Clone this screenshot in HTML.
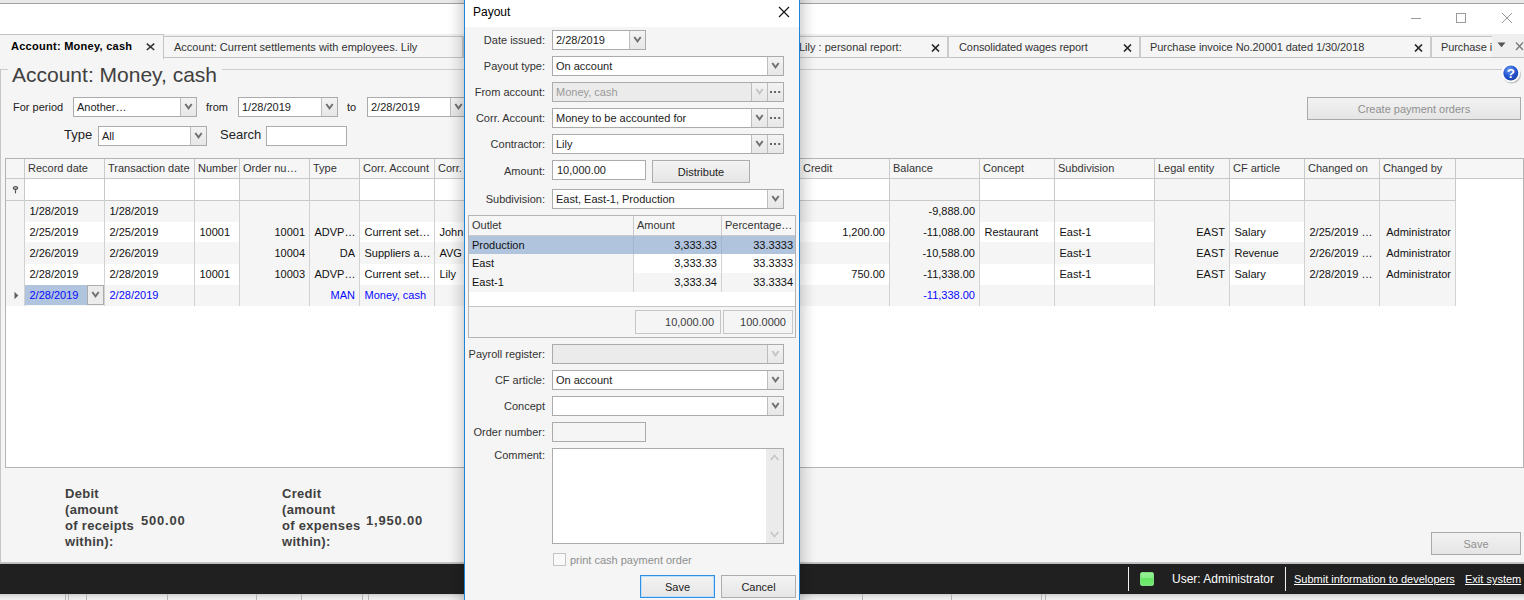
<!DOCTYPE html>
<html lang="en">
<head>
<meta charset="utf-8">
<title>Account: Money, cash - Payout</title>
<style>
html,body{margin:0;padding:0;background:#f5f5f5;}
body{width:1524px;height:600px;overflow:hidden;font-family:"Liberation Sans",sans-serif;font-size:11px;color:#222;}
#app{position:relative;width:1524px;height:600px;overflow:hidden;background:#f5f5f5;}
#app div,#app span,#app i,#app a{box-sizing:border-box;}
.abs{position:absolute;}
.t{position:absolute;white-space:pre;line-height:14px;}
/* top */
#topstrip{position:absolute;left:0;top:0;width:1524px;height:3px;background:#e9e9e9;}
#topline{position:absolute;left:0;top:3px;width:1524px;height:1px;background:#a2a2a2;}
#titlebar{position:absolute;left:0;top:4px;width:1524px;height:30px;background:#fff;}
#tabstrip{position:absolute;left:0;top:34px;width:1524px;height:24px;background:#efefef;}
.tab{position:absolute;top:2px;height:22px;border:1px solid #c3c3c3;border-left:none;border-right:2px solid #cbcbcb;background:#f5f5f5;line-height:20px;white-space:pre;color:#333;}
.tab .x{position:absolute;top:6.5px;}
.tabA{position:absolute;left:0;top:0;width:164px;height:25px;background:#f5f5f5;border-top:1px solid #c3c3c3;border-right:1px solid #c3c3c3;font-weight:bold;color:#000;line-height:24px;letter-spacing:.27px;white-space:pre;}
/* combos */
.combo{position:absolute;border:1px solid #ababab;background:#fff;color:#222;}
.combo.dis{background:#ebebeb;color:#9a9a9a;}
.combo .ctext{position:absolute;left:3px;top:0;line-height:18px;white-space:pre;}
.combo .cbtn{position:absolute;top:0;width:16px;height:100%;border-left:1px solid #bdbdbd;background:linear-gradient(#f3f3f3,#e7e7e7);}
.combo .chev{position:absolute;left:3px;top:5px;}
.combo .dots{position:absolute;left:0;top:0;width:15px;text-align:center;font-style:normal;font-weight:bold;font-size:11px;line-height:18px;color:#555;letter-spacing:1px;text-indent:1px;}
.inp{position:absolute;border:1px solid #ababab;background:#fff;line-height:18px;white-space:pre;padding-left:4px;color:#222;}
.btn{position:absolute;border:1px solid #adadad;background:linear-gradient(#f3f3f3,#e6e6e6);text-align:center;color:#222;white-space:pre;}
.btn.dis{color:#909090;background:linear-gradient(#f2f2f2,#e5e5e5);border-color:#a9a9a9;}
/* grid */
#grid{position:absolute;left:5px;top:158px;width:1519px;height:310px;border:1px solid #b4b4b4;background:#fff;overflow:hidden;}
.hc{position:absolute;top:0;height:20px;background:#f6f6f6;border-right:1px solid #c9c9c9;border-bottom:1px solid #c9c9c9;line-height:19px;padding-left:3px;color:#333;white-space:pre;overflow:hidden;}
.fc{position:absolute;top:20px;height:22px;border-right:1px solid #c9c9c9;border-bottom:1px solid #c9c9c9;background:#fff;}
.fc.g{background:#f5f5f5;}
.c{position:absolute;height:21px;line-height:21px;border-right:1px solid #d2d2d2;white-space:pre;overflow:hidden;color:#111;padding:0 4px 0 4.5px;}
.c.r{text-align:right;}
.c.g{background:#f5f5f5;}
.c.w{background:#fff;}
.c.b{color:#0808ff;}
/* footer */
.sum{position:absolute;font-weight:bold;font-size:13px;line-height:16px;color:#3f3f3f;white-space:pre;letter-spacing:.3px;}
/* status */
#status{position:absolute;left:0;top:564px;width:1524px;height:30px;background:#202020;color:#fff;}
#status .sep{position:absolute;top:3px;width:1px;height:24px;background:#f0f0f0;}
#status a{position:absolute;color:#fff;text-decoration:underline;white-space:pre;line-height:14px;}
#below{position:absolute;left:0;top:594px;width:1524px;height:6px;background:linear-gradient(#cfcfcf,#e6e6e6 50%,#f0f0f0);}
#below i{position:absolute;top:0;width:1px;height:7px;background:#b4b4b4;}
/* dialog */
#shadow{position:absolute;left:447px;top:-10px;width:369px;height:630px;background:linear-gradient(90deg,rgba(0,0,0,0) 0,rgba(0,0,0,.02) 5px,rgba(0,0,0,.07) 11px,rgba(0,0,0,.15) 17px,rgba(0,0,0,.15) 353px,rgba(0,0,0,.07) 359px,rgba(0,0,0,.02) 365px,rgba(0,0,0,0) 369px);}
#dlg{position:absolute;left:464px;top:-1px;width:336px;height:610px;border:1px solid #1a86d9;background:#f5f5f5;}
#dlgtitle{position:absolute;left:0;top:0;width:334px;height:27px;background:#fff;}
#dlg .lbl{position:absolute;left:0;width:80px;text-align:right;line-height:14px;white-space:pre;color:#333;}
#sub{position:absolute;left:3px;top:215px;width:328px;height:123px;border:1px solid #b4b4b4;background:#fff;}
.sh{position:absolute;top:0;height:20px;background:#f6f6f6;border-right:1px solid #c9c9c9;border-bottom:1px solid #c9c9c9;line-height:19px;padding-left:3px;color:#333;white-space:pre;}
.sc{position:absolute;height:19px;line-height:19px;white-space:pre;padding:0 4px 0 3px;color:#111;border-right:1px solid #d2d2d2;}
.sc.r{text-align:right;}
.sc.s{background:#b0c4de;border-right-color:#a3b6cf;}
.sc.g{background:#f5f5f5;}
.sf{position:absolute;top:94px;height:24px;border:1px solid #c6c6c6;background:#f5f5f5;text-align:right;line-height:22px;padding-right:6px;color:#3a3a3a;white-space:pre;}
</style>
</head>
<body>
<div id="app">

<div id="topstrip"></div><div id="topline"></div><div id="titlebar">
<svg class="abs" style="left:1408px;top:6px" width="110" height="20" viewBox="0 0 110 20"><g fill="none" stroke="#9a9a9a" stroke-width="1"><path d="M3 8.5H13"/><rect x="48.5" y="3.5" width="9" height="9"/><path d="M94 3L104 13M104 3L94 13"/></g></svg>
</div>
<div id="tabstrip">
<div class="abs" style="left:0;top:23px;width:1524px;height:1px;background:#c3c3c3"></div>
<div class="tab" style="left:164px;width:300px;padding-left:10px">Account: Current settlements with employees. Lily</div>
<div class="tab" style="left:700px;width:249px;padding-left:99px">Lily : personal report:<svg class="x" width="9" height="8" viewBox="0 0 9 8" style="left:231px"><path d="M1 0.5L8 7.5M8 0.5L1 7.5" stroke="#2b2b2b" stroke-width="1.7" fill="none"/></svg></div>
<div class="tab" style="left:949px;width:192px;padding-left:10px;letter-spacing:-.09px">Consolidated wages report<svg class="x" width="9" height="8" viewBox="0 0 9 8" style="left:174px"><path d="M1 0.5L8 7.5M8 0.5L1 7.5" stroke="#2b2b2b" stroke-width="1.7" fill="none"/></svg></div>
<div class="tab" style="left:1141px;width:291px;padding-left:9px;letter-spacing:-.07px">Purchase invoice No.20001 dated 1/30/2018<svg class="x" width="9" height="8" viewBox="0 0 9 8" style="left:273px"><path d="M1 0.5L8 7.5M8 0.5L1 7.5" stroke="#2b2b2b" stroke-width="1.7" fill="none"/></svg></div>
<div class="tab" style="left:1432px;width:120px;padding-left:9px;letter-spacing:-.1px">Purchase invoice</div>
<div class="abs" style="left:1492px;top:0;width:32px;height:23px;background:#efefef"></div>
<svg class="abs" style="left:1497px;top:8px" width="9" height="6" viewBox="0 0 9 6"><path d="M0.5 0.5H8.5L4.5 5.2Z" fill="#555"/></svg>
<svg class="abs" style="left:1515px;top:8px" width="9" height="9" viewBox="0 0 9 9"><path d="M1 0.5L8 8M8 0.5L1 8" stroke="#787878" stroke-width="1.25" fill="none"/></svg>
<div class="tabA"><span class="abs" style="left:11px;top:-1px">Account: Money, cash</span><svg class="abs" style="left:146px;top:8px" width="9" height="8" viewBox="0 0 9 8"><path d="M0.8 0.6L8.2 7M8.2 0.6L0.8 7" stroke="#333" stroke-width="1.6" fill="none"/></svg></div>
</div>
<div class="abs" style="left:0;top:69px;width:1502px;height:1px;background:#cdcdcd"></div>
<div class="abs" style="left:0;top:69px;width:1px;height:493px;background:#c6c6c6"></div>
<div class="t" style="left:8px;top:62px;font-size:21px;line-height:26px;color:#404040;background:#f5f5f5;padding:0 5px 0 4px;height:24px">Account: Money, cash</div>
<svg class="abs" style="left:1500px;top:62px" width="22" height="24" viewBox="0 0 22 24"><defs><radialGradient id="hg" cx="40%" cy="30%" r="75%"><stop offset="0" stop-color="#6f9cf0"/><stop offset="0.55" stop-color="#2458d2"/><stop offset="1" stop-color="#1a3ea8"/></radialGradient></defs><ellipse cx="11.8" cy="12.6" rx="9.2" ry="9" fill="#c2c2c2"/><circle cx="10.8" cy="11" r="9.3" fill="#fff"/><circle cx="10.8" cy="11" r="7.5" fill="url(#hg)"/><text x="10.8" y="15.6" text-anchor="middle" font-family="Liberation Sans, sans-serif" font-weight="bold" font-size="13.5" fill="#fff">?</text></svg>
<div class="t" style="left:13px;top:100px">For period</div>
<div class="combo  " style="left:73px;top:97px;width:124px;height:20px"><span class="ctext">Another…</span><span class="cbtn" style="right:0px"><svg class="chev" width="9" height="7" viewBox="0 0 9 7"><path d="M1.3 1 L4.5 5.4 L7.7 1" fill="none" stroke="#707070" stroke-width="1.9"/></svg></span></div>
<div class="t" style="left:206px;top:100px">from</div>
<div class="combo  " style="left:238px;top:97px;width:100px;height:20px"><span class="ctext">1/28/2019</span><span class="cbtn" style="right:0px"><svg class="chev" width="9" height="7" viewBox="0 0 9 7"><path d="M1.3 1 L4.5 5.4 L7.7 1" fill="none" stroke="#707070" stroke-width="1.9"/></svg></span></div>
<div class="t" style="left:347px;top:100px">to</div>
<div class="combo  " style="left:367px;top:97px;width:100px;height:20px"><span class="ctext">2/28/2019</span><span class="cbtn" style="right:0px"><svg class="chev" width="9" height="7" viewBox="0 0 9 7"><path d="M1.3 1 L4.5 5.4 L7.7 1" fill="none" stroke="#707070" stroke-width="1.9"/></svg></span></div>
<div class="t" style="left:64px;top:127px;font-size:13px;line-height:16px">Type</div>
<div class="combo  " style="left:98px;top:126px;width:109px;height:20px"><span class="ctext">All</span><span class="cbtn" style="right:0px"><svg class="chev" width="9" height="7" viewBox="0 0 9 7"><path d="M1.3 1 L4.5 5.4 L7.7 1" fill="none" stroke="#707070" stroke-width="1.9"/></svg></span></div>
<div class="t" style="left:220px;top:127px;font-size:13px;line-height:16px">Search</div>
<div class="inp" style="left:266px;top:126px;width:81px;height:20px"></div>
<div class="btn dis" style="left:1307px;top:97px;width:214px;height:23px;line-height:22px">Create payment orders</div>
<div id="grid">
<div class="hc" style="left:0px;width:19px"></div>
<div class="hc" style="left:19px;width:80px">Record date</div>
<div class="hc" style="left:99px;width:90px">Transaction date</div>
<div class="hc" style="left:189px;width:45px">Number</div>
<div class="hc" style="left:234px;width:70px">Order nu…</div>
<div class="hc" style="left:304px;width:50px">Type</div>
<div class="hc" style="left:354px;width:75px">Corr. Account</div>
<div class="hc" style="left:429px;width:100px">Corr. contr…</div>
<div class="hc" style="left:529px;width:175px">Comment</div>
<div class="hc" style="left:704px;width:90px">Debit</div>
<div class="hc" style="left:794px;width:90px">Credit</div>
<div class="hc" style="left:884px;width:90px">Balance</div>
<div class="hc" style="left:974px;width:75px">Concept</div>
<div class="hc" style="left:1049px;width:100px">Subdivision</div>
<div class="hc" style="left:1149px;width:75px">Legal entity</div>
<div class="hc" style="left:1224px;width:75px">CF article</div>
<div class="hc" style="left:1299px;width:75px">Changed on</div>
<div class="hc" style="left:1374px;width:76px">Changed by</div>
<div class="hc" style="left:1450px;width:70px;border-right:none"></div>
<div class="fc g" style="left:0px;width:19px"></div>
<div class="fc " style="left:19px;width:80px"></div>
<div class="fc " style="left:99px;width:90px"></div>
<div class="fc " style="left:189px;width:45px"></div>
<div class="fc g" style="left:234px;width:70px"></div>
<div class="fc g" style="left:304px;width:50px"></div>
<div class="fc " style="left:354px;width:75px"></div>
<div class="fc " style="left:429px;width:100px"></div>
<div class="fc " style="left:529px;width:175px"></div>
<div class="fc " style="left:704px;width:90px"></div>
<div class="fc " style="left:794px;width:90px"></div>
<div class="fc g" style="left:884px;width:90px"></div>
<div class="fc " style="left:974px;width:75px"></div>
<div class="fc " style="left:1049px;width:100px"></div>
<div class="fc g" style="left:1149px;width:75px"></div>
<div class="fc " style="left:1224px;width:75px"></div>
<div class="fc g" style="left:1299px;width:75px"></div>
<div class="fc g" style="left:1374px;width:76px"></div>
<svg class="abs" style="left:5.9px;top:27px" width="7" height="9" viewBox="0 0 7 9"><path d="M1.2 2L3.5 4.9L5.8 2Z" fill="#505050"/><ellipse cx="3.5" cy="1.9" rx="2.2" ry="1.35" fill="#bdbdbd" stroke="#505050" stroke-width="1.1"/><path d="M3.5 4.4V7.4" stroke="#505050" stroke-width="1.15"/></svg>
<div class="c g " style="left:0px;top:42px;width:19px;height:21px;line-height:21px"></div>
<div class="c g " style="left:19px;top:42px;width:80px;height:21px;line-height:21px">1/28/2019</div>
<div class="c g " style="left:99px;top:42px;width:90px;height:21px;line-height:21px">1/28/2019</div>
<div class="c g " style="left:189px;top:42px;width:45px;height:21px;line-height:21px"></div>
<div class="c r g " style="left:234px;top:42px;width:70px;height:21px;line-height:21px"></div>
<div class="c r g " style="left:304px;top:42px;width:50px;height:21px;line-height:21px"></div>
<div class="c g " style="left:354px;top:42px;width:75px;height:21px;line-height:21px"></div>
<div class="c g " style="left:429px;top:42px;width:100px;height:21px;line-height:21px"></div>
<div class="c g " style="left:529px;top:42px;width:175px;height:21px;line-height:21px"></div>
<div class="c r g " style="left:704px;top:42px;width:90px;height:21px;line-height:21px"></div>
<div class="c r g " style="left:794px;top:42px;width:90px;height:21px;line-height:21px"></div>
<div class="c r g " style="left:884px;top:42px;width:90px;height:21px;line-height:21px">-9,888.00</div>
<div class="c g " style="left:974px;top:42px;width:75px;height:21px;line-height:21px"></div>
<div class="c g " style="left:1049px;top:42px;width:100px;height:21px;line-height:21px"></div>
<div class="c r g " style="left:1149px;top:42px;width:75px;height:21px;line-height:21px"></div>
<div class="c g " style="left:1224px;top:42px;width:75px;height:21px;line-height:21px"></div>
<div class="c g " style="left:1299px;top:42px;width:75px;height:21px;line-height:21px"></div>
<div class="c r g " style="left:1374px;top:42px;width:76px;height:21px;line-height:21px"></div>
<div class="c g " style="left:0px;top:63px;width:19px;height:20px;line-height:20px"></div>
<div class="c w " style="left:19px;top:63px;width:80px;height:20px;line-height:20px">2/25/2019</div>
<div class="c w " style="left:99px;top:63px;width:90px;height:20px;line-height:20px">2/25/2019</div>
<div class="c w " style="left:189px;top:63px;width:45px;height:20px;line-height:20px">10001</div>
<div class="c r g " style="left:234px;top:63px;width:70px;height:20px;line-height:20px">10001</div>
<div class="c r g " style="left:304px;top:63px;width:50px;height:20px;line-height:20px">ADVP…</div>
<div class="c w " style="left:354px;top:63px;width:75px;height:20px;line-height:20px">Current set…</div>
<div class="c w " style="left:429px;top:63px;width:100px;height:20px;line-height:20px">John</div>
<div class="c w " style="left:529px;top:63px;width:175px;height:20px;line-height:20px"></div>
<div class="c r w " style="left:704px;top:63px;width:90px;height:20px;line-height:20px"></div>
<div class="c r w " style="left:794px;top:63px;width:90px;height:20px;line-height:20px">1,200.00</div>
<div class="c r g " style="left:884px;top:63px;width:90px;height:20px;line-height:20px">-11,088.00</div>
<div class="c w " style="left:974px;top:63px;width:75px;height:20px;line-height:20px">Restaurant</div>
<div class="c w " style="left:1049px;top:63px;width:100px;height:20px;line-height:20px">East-1</div>
<div class="c r g " style="left:1149px;top:63px;width:75px;height:20px;line-height:20px">EAST</div>
<div class="c w " style="left:1224px;top:63px;width:75px;height:20px;line-height:20px">Salary</div>
<div class="c g " style="left:1299px;top:63px;width:75px;height:20px;line-height:20px">2/25/2019 …</div>
<div class="c r g " style="left:1374px;top:63px;width:76px;height:20px;line-height:20px">Administrator</div>
<div class="c g " style="left:0px;top:83px;width:19px;height:22px;line-height:22px"></div>
<div class="c g " style="left:19px;top:83px;width:80px;height:22px;line-height:22px">2/26/2019</div>
<div class="c g " style="left:99px;top:83px;width:90px;height:22px;line-height:22px">2/26/2019</div>
<div class="c g " style="left:189px;top:83px;width:45px;height:22px;line-height:22px"></div>
<div class="c r g " style="left:234px;top:83px;width:70px;height:22px;line-height:22px">10004</div>
<div class="c r g " style="left:304px;top:83px;width:50px;height:22px;line-height:22px">DA</div>
<div class="c g " style="left:354px;top:83px;width:75px;height:22px;line-height:22px">Suppliers a…</div>
<div class="c g " style="left:429px;top:83px;width:100px;height:22px;line-height:22px">AVG</div>
<div class="c g " style="left:529px;top:83px;width:175px;height:22px;line-height:22px"></div>
<div class="c r g " style="left:704px;top:83px;width:90px;height:22px;line-height:22px">500.00</div>
<div class="c r g " style="left:794px;top:83px;width:90px;height:22px;line-height:22px"></div>
<div class="c r g " style="left:884px;top:83px;width:90px;height:22px;line-height:22px">-10,588.00</div>
<div class="c g " style="left:974px;top:83px;width:75px;height:22px;line-height:22px"></div>
<div class="c g " style="left:1049px;top:83px;width:100px;height:22px;line-height:22px">East-1</div>
<div class="c r g " style="left:1149px;top:83px;width:75px;height:22px;line-height:22px">EAST</div>
<div class="c g " style="left:1224px;top:83px;width:75px;height:22px;line-height:22px">Revenue</div>
<div class="c g " style="left:1299px;top:83px;width:75px;height:22px;line-height:22px">2/26/2019 …</div>
<div class="c r g " style="left:1374px;top:83px;width:76px;height:22px;line-height:22px">Administrator</div>
<div class="c g " style="left:0px;top:105px;width:19px;height:21px;line-height:21px"></div>
<div class="c w " style="left:19px;top:105px;width:80px;height:21px;line-height:21px">2/28/2019</div>
<div class="c w " style="left:99px;top:105px;width:90px;height:21px;line-height:21px">2/28/2019</div>
<div class="c w " style="left:189px;top:105px;width:45px;height:21px;line-height:21px">10001</div>
<div class="c r g " style="left:234px;top:105px;width:70px;height:21px;line-height:21px">10003</div>
<div class="c r g " style="left:304px;top:105px;width:50px;height:21px;line-height:21px">ADVP…</div>
<div class="c w " style="left:354px;top:105px;width:75px;height:21px;line-height:21px">Current set…</div>
<div class="c w " style="left:429px;top:105px;width:100px;height:21px;line-height:21px">Lily</div>
<div class="c w " style="left:529px;top:105px;width:175px;height:21px;line-height:21px"></div>
<div class="c r w " style="left:704px;top:105px;width:90px;height:21px;line-height:21px"></div>
<div class="c r w " style="left:794px;top:105px;width:90px;height:21px;line-height:21px">750.00</div>
<div class="c r g " style="left:884px;top:105px;width:90px;height:21px;line-height:21px">-11,338.00</div>
<div class="c w " style="left:974px;top:105px;width:75px;height:21px;line-height:21px"></div>
<div class="c w " style="left:1049px;top:105px;width:100px;height:21px;line-height:21px">East-1</div>
<div class="c r g " style="left:1149px;top:105px;width:75px;height:21px;line-height:21px">EAST</div>
<div class="c w " style="left:1224px;top:105px;width:75px;height:21px;line-height:21px">Salary</div>
<div class="c g " style="left:1299px;top:105px;width:75px;height:21px;line-height:21px">2/28/2019 …</div>
<div class="c r g " style="left:1374px;top:105px;width:76px;height:21px;line-height:21px">Administrator</div>
<div class="c g b" style="left:0px;top:126px;width:19px;height:21px;line-height:21px"></div>
<div class="c g b" style="left:19px;top:126px;width:80px;height:21px;line-height:21px">2/28/2019</div>
<div class="c g b" style="left:99px;top:126px;width:90px;height:21px;line-height:21px">2/28/2019</div>
<div class="c g b" style="left:189px;top:126px;width:45px;height:21px;line-height:21px"></div>
<div class="c r g b" style="left:234px;top:126px;width:70px;height:21px;line-height:21px"></div>
<div class="c r g b" style="left:304px;top:126px;width:50px;height:21px;line-height:21px">MAN</div>
<div class="c g b" style="left:354px;top:126px;width:75px;height:21px;line-height:21px">Money, cash</div>
<div class="c g b" style="left:429px;top:126px;width:100px;height:21px;line-height:21px"></div>
<div class="c g b" style="left:529px;top:126px;width:175px;height:21px;line-height:21px"></div>
<div class="c r g b" style="left:704px;top:126px;width:90px;height:21px;line-height:21px"></div>
<div class="c r g b" style="left:794px;top:126px;width:90px;height:21px;line-height:21px"></div>
<div class="c r g b" style="left:884px;top:126px;width:90px;height:21px;line-height:21px">-11,338.00</div>
<div class="c g b" style="left:974px;top:126px;width:75px;height:21px;line-height:21px"></div>
<div class="c g b" style="left:1049px;top:126px;width:100px;height:21px;line-height:21px"></div>
<div class="c r g b" style="left:1149px;top:126px;width:75px;height:21px;line-height:21px"></div>
<div class="c g b" style="left:1224px;top:126px;width:75px;height:21px;line-height:21px"></div>
<div class="c g b" style="left:1299px;top:126px;width:75px;height:21px;line-height:21px"></div>
<div class="c r g b" style="left:1374px;top:126px;width:76px;height:21px;line-height:21px"></div>
<div class="abs" style="left:19px;top:126px;width:62px;height:20px;background:#b0c4de;color:#0808ff;line-height:21px;padding-left:4.5px;white-space:pre">2/28/2019</div>
<div class="abs" style="left:81px;top:126px;width:17px;height:20px;border:1px solid #ababab;background:#ececec"><svg class="abs" style="left:3px;top:5px" width="9" height="7" viewBox="0 0 9 7"><path d="M1.3 1 L4.5 5.4 L7.7 1" fill="none" stroke="#707070" stroke-width="1.9"/></svg></div>
<svg class="abs" style="left:8px;top:132px" width="5" height="9" viewBox="0 0 5 9"><path d="M0.5 0.8L4.3 4.5L0.5 8.2Z" fill="#606060"/></svg>
</div>
<div class="sum" style="left:65px;top:486px">Debit
(amount
of receipts
within):</div>
<div class="sum" style="left:141px;top:513px;letter-spacing:.8px">500.00</div>
<div class="sum" style="left:282px;top:486px">Credit
(amount
of expenses
within):</div>
<div class="sum" style="left:366px;top:513px;letter-spacing:.8px">1,950.00</div>
<div class="btn dis" style="left:1431px;top:532px;width:90px;height:23px;line-height:22px">Save</div>
<div class="abs" style="left:0;top:562px;width:1524px;height:2px;background:linear-gradient(#cacaca,#b8b8b8)"></div>
<div id="status">
<div class="sep" style="left:1128px"></div>
<div class="abs" style="left:1140px;top:8px;width:14px;height:14px;border-radius:2px;background:linear-gradient(#98f298,#86ee86 42%,#64e664 46%,#72ea72);border:1px solid #7fdc7f"></div>
<div class="t" style="left:1172px;top:8px;font-size:12px;line-height:15px;color:#fff">User: Administrator</div>
<div class="sep" style="left:1285px"></div>
<a style="left:1294px;top:8px">Submit information to developers</a>
<a style="left:1465px;top:8px">Exit system</a>
</div>
<div id="below">
<i style="left:65px"></i>
<i style="left:68px"></i>
<i style="left:86px"></i>
<i style="left:167px"></i>
<i style="left:256px"></i>
<i style="left:301px"></i>
<i style="left:362px"></i>
<i style="left:368px"></i>
<i style="left:862px"></i>
<i style="left:951px"></i>
<i style="left:1041px"></i>
<i style="left:1045px"></i>
</div>
<div id="shadow"></div>
<div id="dlg">
<div id="dlgtitle"><span class="t" style="left:8px;top:5px;font-size:12px;line-height:15px;color:#000">Payout</span>
<svg class="abs" style="left:313px;top:6px" width="12" height="12" viewBox="0 0 12 12"><path d="M1 1L11 11M11 1L1 11" stroke="#111" stroke-width="1.1" fill="none"/></svg></div>
<div class="lbl" style="top:33px">Date issued:</div>
<div class="combo  " style="left:87px;top:30px;width:94px;height:20px"><span class="ctext">2/28/2019</span><span class="cbtn" style="right:0px"><svg class="chev" width="9" height="7" viewBox="0 0 9 7"><path d="M1.3 1 L4.5 5.4 L7.7 1" fill="none" stroke="#707070" stroke-width="1.9"/></svg></span></div>
<div class="lbl" style="top:59px">Payout type:</div>
<div class="combo  " style="left:87px;top:56px;width:232px;height:20px"><span class="ctext">On account</span><span class="cbtn" style="right:0px"><svg class="chev" width="9" height="7" viewBox="0 0 9 7"><path d="M1.3 1 L4.5 5.4 L7.7 1" fill="none" stroke="#707070" stroke-width="1.9"/></svg></span></div>
<div class="lbl" style="top:85px">From account:</div>
<div class="combo dis " style="left:87px;top:82px;width:232px;height:20px"><span class="ctext">Money, cash</span><span class="cbtn" style="right:0"><svg class="abs" style="left:2px;top:8px" width="11" height="2" viewBox="0 0 11 2"><rect x="0" y="0" width="2" height="2" fill="#666"/><rect x="4" y="0" width="2" height="2" fill="#666"/><rect x="8.2" y="0" width="2" height="2" fill="#666"/></svg></span><span class="cbtn" style="right:16px"><svg class="chev" width="9" height="7" viewBox="0 0 9 7"><path d="M1.3 1 L4.5 5.4 L7.7 1" fill="none" stroke="#c4c4c4" stroke-width="1.9"/></svg></span></div>
<div class="lbl" style="top:111px">Corr. Account:</div>
<div class="combo  " style="left:87px;top:108px;width:232px;height:20px"><span class="ctext">Money to be accounted for</span><span class="cbtn" style="right:0"><svg class="abs" style="left:2px;top:8px" width="11" height="2" viewBox="0 0 11 2"><rect x="0" y="0" width="2" height="2" fill="#666"/><rect x="4" y="0" width="2" height="2" fill="#666"/><rect x="8.2" y="0" width="2" height="2" fill="#666"/></svg></span><span class="cbtn" style="right:16px"><svg class="chev" width="9" height="7" viewBox="0 0 9 7"><path d="M1.3 1 L4.5 5.4 L7.7 1" fill="none" stroke="#707070" stroke-width="1.9"/></svg></span></div>
<div class="lbl" style="top:137px">Contractor:</div>
<div class="combo  " style="left:87px;top:134px;width:232px;height:20px"><span class="ctext">Lily</span><span class="cbtn" style="right:0"><svg class="abs" style="left:2px;top:8px" width="11" height="2" viewBox="0 0 11 2"><rect x="0" y="0" width="2" height="2" fill="#666"/><rect x="4" y="0" width="2" height="2" fill="#666"/><rect x="8.2" y="0" width="2" height="2" fill="#666"/></svg></span><span class="cbtn" style="right:16px"><svg class="chev" width="9" height="7" viewBox="0 0 9 7"><path d="M1.3 1 L4.5 5.4 L7.7 1" fill="none" stroke="#707070" stroke-width="1.9"/></svg></span></div>
<div class="lbl" style="top:164px">Amount:</div>
<div class="inp" style="left:87px;top:160px;width:94px;height:20px">10,000.00</div>
<div class="btn" style="left:187px;top:160px;width:98px;height:23px;line-height:22px">Distribute</div>
<div class="lbl" style="top:192px">Subdivision:</div>
<div class="combo  " style="left:87px;top:189px;width:232px;height:20px"><span class="ctext">East, East-1, Production</span><span class="cbtn" style="right:0px"><svg class="chev" width="9" height="7" viewBox="0 0 9 7"><path d="M1.3 1 L4.5 5.4 L7.7 1" fill="none" stroke="#707070" stroke-width="1.9"/></svg></span></div>
<div id="sub">
<div class="sh" style="left:0;width:165px">Outlet</div><div class="sh" style="left:165px;width:88px">Amount</div><div class="sh" style="left:253px;width:73px;border-right:none">Percentage…</div>
<div class="sc s" style="left:0;top:20px;width:165px;height:18px;line-height:18px">Production</div><div class="sc r s" style="left:165px;top:20px;width:88px;height:18px;line-height:18px">3,333.33</div><div class="sc r s" style="left:253px;top:20px;width:73px;border-right:none;padding-right:2px;height:18px;line-height:18px">33.3333</div>
<div class="sc g" style="left:0;top:38px;width:165px;height:19px;line-height:19px">East</div><div class="sc r " style="left:165px;top:38px;width:88px;height:19px;line-height:19px">3,333.33</div><div class="sc r " style="left:253px;top:38px;width:73px;border-right:none;padding-right:2px;height:19px;line-height:19px">33.3333</div>
<div class="sc g" style="left:0;top:57px;width:165px;height:19px;line-height:19px">East-1</div><div class="sc r g" style="left:165px;top:57px;width:88px;height:19px;line-height:19px">3,333.34</div><div class="sc r g" style="left:253px;top:57px;width:73px;border-right:none;padding-right:2px;height:19px;line-height:19px">33.3334</div>
<div class="abs" style="left:0;top:90px;width:326px;height:31px;border-top:1px solid #c6c6c6;background:#f5f5f5"></div>
<div class="sf" style="left:166px;width:86px">10,000.00</div><div class="sf" style="left:254px;width:70px">100.0000</div>
</div>
<div class="lbl" style="top:347px">Payroll register:</div>
<div class="combo dis " style="left:87px;top:344px;width:232px;height:20px"><span class="ctext"></span><span class="cbtn" style="right:0px"><svg class="chev" width="9" height="7" viewBox="0 0 9 7"><path d="M1.3 1 L4.5 5.4 L7.7 1" fill="none" stroke="#c4c4c4" stroke-width="1.9"/></svg></span></div>
<div class="lbl" style="top:373px">CF article:</div>
<div class="combo  " style="left:87px;top:370px;width:232px;height:20px"><span class="ctext">On account</span><span class="cbtn" style="right:0px"><svg class="chev" width="9" height="7" viewBox="0 0 9 7"><path d="M1.3 1 L4.5 5.4 L7.7 1" fill="none" stroke="#707070" stroke-width="1.9"/></svg></span></div>
<div class="lbl" style="top:399px">Concept</div>
<div class="combo  " style="left:87px;top:396px;width:232px;height:20px"><span class="ctext"></span><span class="cbtn" style="right:0px"><svg class="chev" width="9" height="7" viewBox="0 0 9 7"><path d="M1.3 1 L4.5 5.4 L7.7 1" fill="none" stroke="#707070" stroke-width="1.9"/></svg></span></div>
<div class="lbl" style="top:425px">Order number:</div>
<div class="inp" style="left:87px;top:422px;width:94px;height:20px;background:#f5f5f5"></div>
<div class="lbl" style="top:448px">Comment:</div>
<div class="inp" style="left:87px;top:448px;width:232px;height:96px"><div class="abs" style="right:0;top:0;width:17px;height:94px;background:#ebebeb"><svg class="abs" style="left:4px;top:5px" width="9" height="7" viewBox="0 0 9 7"><path d="M0.8 6 L4.5 1.4 L8.2 6" fill="none" stroke="#c4c4c4" stroke-width="1.5"/></svg><svg class="abs" style="left:4px;top:82px" width="9" height="7" viewBox="0 0 9 7"><path d="M0.8 1 L4.5 5.6 L8.2 1" fill="none" stroke="#c4c4c4" stroke-width="1.5"/></svg></div></div>
<div class="abs" style="left:88px;top:553px;width:13px;height:13px;border:1px solid #c4c4c4;background:#f9f9f9"></div>
<div class="t" style="left:105px;top:553px;color:#8e8e8e">print cash payment order</div>
<div class="btn" style="left:175px;top:575px;width:75px;height:23px;line-height:22px;border-color:#2f8fe0;box-shadow:inset 0 0 0 1px #bfe0fa">Save</div>
<div class="btn" style="left:256px;top:575px;width:75px;height:23px;line-height:22px">Cancel</div>
</div>
</div>
</body>
</html>
